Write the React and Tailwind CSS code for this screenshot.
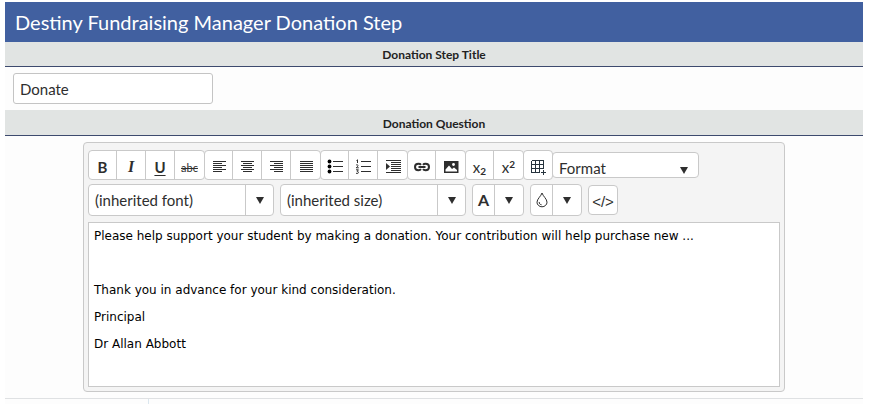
// Donation step settings form

import { useState } from "react"

// toolbar icons, drawn on a 16px grid
const Lines = ({ rows }) => (
    <svg viewBox="0 0 16 16" className="w-4 h-4" fill="none" stroke="currentColor" shapeRendering="crispEdges" aria-hidden="true">
        {rows.map(([from, to], i) => (
            <path key={i} d={`M${from} ${2.5 + i * 2}H${to}`} />
        ))}
    </svg>
)

const ICONS = {
    left: <Lines rows={[[2, 15], [2, 11], [2, 15], [2, 11], [2, 15], [2, 11]]} />,
    center: <Lines rows={[[2, 15], [4, 13], [2, 15], [4, 13], [2, 15], [4, 13]]} />,
    right: <Lines rows={[[2, 15], [6, 15], [2, 15], [6, 15], [2, 15], [6, 15]]} />,
    justify: <Lines rows={[[2, 15], [2, 15], [2, 15], [2, 15], [2, 15], [2, 15]]} />,
    bullets: (
        <svg viewBox="0 0 16 16" className="w-4 h-4" aria-hidden="true">
            <path d="M6 2.5H16M6 7.5H16M6 12.5H16" stroke="currentColor" />
            <circle cx="2.5" cy="2.5" r="1.9" />
            <circle cx="2.5" cy="7.5" r="1.9" />
            <circle cx="2.5" cy="12.5" r="1.9" />
        </svg>
    ),
    numbers: (
        <svg viewBox="0 0 16 16" className="w-4 h-4" fill="none" stroke="currentColor" aria-hidden="true">
            <path d="M6 2.5H16M6 7.5H16M6 12.5H16" />
            <path d="M1.5 1.5L2.5 .8V4M1 6.2C2 5.2 3.6 6 2.8 7.2L1.2 8.8H3.8M1 10.8H3.4L2.2 12.3C3.8 12.3 3.8 14.5 2.2 14.5L1 14.2" />
        </svg>
    ),
    indent: (
        <svg viewBox="0 0 16 16" className="w-4 h-4" aria-hidden="true">
            <path d="M1 1.5H16M6 3.5H16M6 5.5H16M6 7.5H16M6 9.5H16M6 11.5H16M1 13.5H16" stroke="currentColor" shapeRendering="crispEdges" />
            <path d="M1 4V11L5 7.5Z" fill="currentColor" />
        </svg>
    ),
    link: (
        <svg viewBox="0 0 16 16" className="w-4 h-4" fill="none" stroke="currentColor" strokeWidth="2" aria-hidden="true">
            <path d="M7 10.2C6.4 11 5.5 11.2 4.5 11.2C2.4 11.2 1 9.9 1 8S2.4 4.8 4.5 4.8C5.5 4.8 6.4 5 7 5.8M9 5.8C9.6 5 10.5 4.8 11.5 4.8C13.6 4.8 15 6.1 15 8S13.6 11.2 11.5 11.2C10.5 11.2 9.6 11 9 10.2M4.5 8H11.5" />
        </svg>
    ),
    image: (
        <svg viewBox="0 0 16 16" className="w-4 h-4" aria-hidden="true">
            <path d="M1 2H15.5V14H1Z" fill="currentColor" />
            <path d="M2.5 12.5V10.5L6 6.5L9 10L11 8.5L14 11V12.5Z" fill="#fff" />
            <circle cx="10.5" cy="5.5" r="1.4" fill="#fff" />
        </svg>
    ),
    table: (
        <svg viewBox="0 0 16 16" className="w-4 h-4" fill="none" stroke="currentColor" shapeRendering="crispEdges" aria-hidden="true">
            <path d="M1.5 1.5H13.5V10M10 13.5H1.5V1.5M1 5.5H14M1 9.5H14M5.5 1V14M9.5 1V14" />
            <path d="M13.5 11V16M11 13.5H16" />
        </svg>
    ),
    drop: (
        <svg viewBox="0 0 16 16" className="w-4 h-4" fill="none" stroke="currentColor" aria-hidden="true">
            <path d="M8 1C7 4.2 3 7 3 10.2A5 4.6 0 0 0 13 10.2C13 7 9 4.2 8 1Z" />
            <path d="M5.2 10C5.1 11.7 6.2 12.7 7.6 12.8" />
        </svg>
    ),
}

const BUTTON_GROUPS = [
    [
        { name: "Bold", icon: <b className="text-[15px]">B</b> },
        { name: "Italic", icon: <i className="font-['Liberation_Serif',serif] text-base font-bold">I</i> },
        { name: "Underline", icon: <b className="text-[15px] underline underline-offset-2">U</b> },
        { name: "Strikethrough", icon: <s className="pt-0.5 text-[11px]">abc</s> },
    ],
    [
        { name: "Align left", icon: ICONS.left },
        { name: "Align center", icon: ICONS.center },
        { name: "Align right", icon: ICONS.right },
        { name: "Justify", icon: ICONS.justify },
    ],
    [
        { name: "Bulleted list", icon: ICONS.bullets },
        { name: "Numbered list", icon: ICONS.numbers },
        { name: "Indent", icon: ICONS.indent },
    ],
    [
        { name: "Insert link", icon: ICONS.link },
        { name: "Insert image", icon: ICONS.image },
    ],
    [
        { name: "Subscript", icon: <span className="text-[15px]">x<sub className="text-[10px] font-bold">2</sub></span> },
        { name: "Superscript", icon: <span className="text-[15px]">x<sup className="text-[10px] font-bold">2</sup></span> },
    ],
    [{ name: "Insert table", icon: <span className="text-[#26333d]">{ICONS.table}</span> }],
]

const Arrow = () => (
    <svg viewBox="0 0 8 7" className="w-2 h-[7px]" fill="currentColor" aria-hidden="true">
        <path d="M0 0H8L4 7Z" />
    </svg>
)

function ToolGroup({ tools }) {
    return (
        <div className="flex h-[30px] -mr-px bg-white border border-[#c9c9c9] rounded divide-x divide-[#c9c9c9]">
            {tools.map((tool) => (
                <button key={tool.name} type="button" aria-label={tool.name} className="w-[29px] first:w-7 pt-1 flex items-center justify-center">
                    {tool.icon}
                </button>
            ))}
        </div>
    )
}

function Picker({ label }) {
    return (
        <div className="grid w-[186px] h-8 bg-white border border-[#c9c9c9] rounded">
            <select aria-label={label} className="col-start-1 row-start-1 appearance-none pl-1.5 text-[15px] outline-none">
                <option>{label}</option>
            </select>
            <span className="col-start-1 row-start-1 justify-self-end w-7 flex items-center justify-center border-l border-[#c9c9c9] pointer-events-none">
                <Arrow />
            </span>
        </div>
    )
}

function ColorButton({ label, children }) {
    return (
        <div className="flex h-8 bg-white border border-[#c9c9c9] rounded divide-x divide-[#c9c9c9]">
            <button type="button" aria-label={label} className="w-[22px] flex items-center justify-center">{children}</button>
            <button type="button" aria-label={label + " options"} className="w-7 flex items-center justify-center"><Arrow /></button>
        </div>
    )
}

export default function App() {

    const [title, setTitle] = useState("Donate")
    const [question, setQuestion] = useState(
        "Please help support your student by making a donation. Your contribution will help purchase new ...\n\n" +
        "Thank you in advance for your kind consideration.\nPrincipal\nDr Allan Abbott"
    )

    return (
        <main className="pt-0.5 pl-[5px] pr-1.5 font-['Lato',sans-serif] text-[#2e2e2e]">
            <h1 className="h-10 px-2.5 flex items-center bg-[#4160a0] text-white text-xl">
                Destiny Fundraising Manager Donation Step
            </h1>

            <form className="bg-[#fdfdfd]">
                <label htmlFor="stepTitle" className="block h-[25px] leading-[26px] text-center text-xs font-bold text-[#222] bg-[#e1e4e3] border-b border-[#3d4a6e]">
                    Donation Step Title
                </label>
                <div className="px-2 py-1.5">
                    <input
                        id="stepTitle"
                        type="text"
                        value={title}
                        onChange={(e) => setTitle(e.target.value)}
                        className="block w-[200px] h-[31px] px-1.5 text-[15px] bg-white border border-[#c4c4c4] rounded-[3px] outline-none"
                    />
                </div>

                <label htmlFor="question" className="block h-[26px] leading-7 text-center text-xs font-bold text-[#222] bg-[#e1e4e3] border-b border-[#3d4a6e]">
                    Donation Question
                </label>
                <div className="py-1.5 border-b border-[#dfe1e3]">
                    <div className="w-[702px] max-w-full mx-auto px-1 pt-[7px] pb-1 bg-[#f4f4f4] border border-[#c9c9c9] rounded">
                        <div className="flex flex-wrap items-center">
                            {BUTTON_GROUPS.map((tools) => (
                                <ToolGroup key={tools[0].name} tools={tools} />
                            ))}
                            <div className="grid w-[147px] h-[26px] bg-white border border-[#c9c9c9] rounded">
                                <select aria-label="Format" className="col-start-1 row-start-1 appearance-none pl-1.5 pt-1 text-[15px] outline-none">
                                    <option>Format</option>
                                </select>
                                <span className="col-start-1 row-start-1 justify-self-end self-center pr-2.5 pt-2 pointer-events-none">
                                    <Arrow />
                                </span>
                            </div>
                        </div>

                        <div className="flex flex-wrap items-center gap-1.5 pt-1 pb-1.5">
                            <Picker label="(inherited font)" />
                            <Picker label="(inherited size)" />
                            <ColorButton label="Text color">
                                <b className="text-base">A</b>
                            </ColorButton>
                            <ColorButton label="Background color">{ICONS.drop}</ColorButton>
                            <button type="button" aria-label="View HTML" className="w-[30px] h-[30px] pt-1 flex items-center justify-center bg-white border border-[#c9c9c9] rounded font-['Liberation_Sans',sans-serif] text-[15px]">
                                &lt;/&gt;
                            </button>
                        </div>

                        <textarea
                            id="question"
                            rows={6}
                            value={question}
                            onChange={(e) => setQuestion(e.target.value)}
                            className="block w-full h-[165px] px-[5px] resize-none bg-white border border-[#c9c9c9] outline-none font-['DejaVu_Sans',sans-serif] text-xs leading-[27px] text-black"
                        />
                    </div>
                </div>
                <div className="w-36 h-[5px] border-r border-[#dbe7ef]" />
            </form>
        </main>
    )
}
